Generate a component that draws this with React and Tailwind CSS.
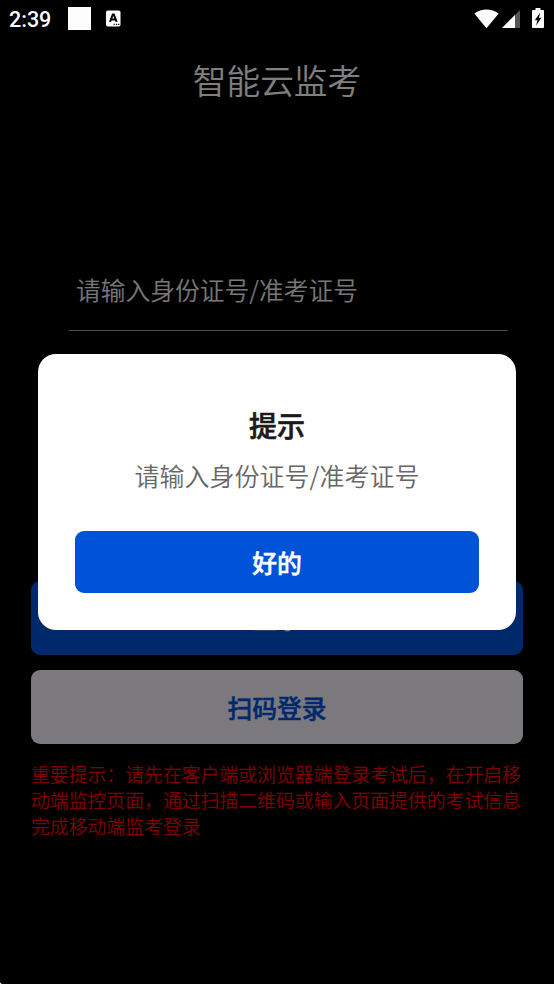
import React, { useState } from 'react';

const PLACEHOLDER = '请输入身份证号/准考证号';

// Android style status bar, stays above the dimmed backdrop
const StatusBar = () => (
    <header className="relative z-20 flex h-10 items-center pr-[10px] pl-[9px] text-white">
        <span className="w-[59px] font-['Roboto',sans-serif] text-[21.5px] leading-[38px] font-medium">2:39</span>
        <span className="-mt-[3px] h-[23px] w-[23px] bg-[#fdfdfd]" />
        <svg className="-mt-[3px] ml-[15px]" width="15" height="17" viewBox="0 0 15 17">
            <rect x="0" y="0.5" width="14.5" height="16" rx="1.8" fill="#fff" />
            <path d="M4 11.8 6.8 4.4h1l2.8 7.4M5.2 9.4h4.2" fill="none" stroke="#000" strokeWidth="2" />
            <path d="M7.6 14.4h1.2M10 14.4h1.2M12.2 14.4h1.2" stroke="#000" strokeWidth="1.3" />
        </svg>
        <div className="-mt-[3px] ml-auto flex items-center">
            <svg width="25" height="20" viewBox="0 0 25 20">
                <path d="M0.3 4.4C7.5-0.9 17.5-0.9 24.7 4.4L12.5 19.3Z" fill="#fff" />
            </svg>
            <svg className="ml-[3px]" width="18" height="18" viewBox="0 0 18 18">
                <path d="M0 18 18 0V18Z" fill="#555" />
                <path d="M0 18 13 5V18Z" fill="#fff" />
            </svg>
            <svg className="-mt-[2px] ml-[12px]" width="12" height="20" viewBox="0 0 12 20">
                <path d="M3.5 0h5v2H11a1 1 0 0 1 1 1v16a1 1 0 0 1-1 1H1a1 1 0 0 1-1-1V3a1 1 0 0 1 1-1h2.5Z" fill="#fff" />
                <path d="M8.2 4.4 2.8 12.2h2.6L4 17.8 9.4 9.8H6.9Z" fill="#000" />
            </svg>
        </div>
    </header>
);

const TipDialog = ({ onClose }) => (
    <div className="absolute inset-0 z-10 flex flex-col items-center bg-black/50 pt-[354px]">
        <div
            role="dialog"
            className="flex h-[275.5px] w-[478px] flex-col items-center rounded-[18px] bg-white px-[36.7px] pt-[51px]"
        >
            <h2 className="text-[28px] leading-[40px] font-medium text-[#1a1a1a] [-webkit-text-stroke:0.6px]">提示</h2>
            <p className="mt-[10px] text-[25px] leading-[40px] font-[350] whitespace-nowrap text-[#666]">{PLACEHOLDER}</p>
            <button
                onClick={onClose}
                className="mt-[36px] h-[61.5px] w-full rounded-[9px] bg-[#0052d9] pt-px text-[24.8px] font-medium text-white [-webkit-text-stroke:0.5px]"
            >
                好的
            </button>
        </div>
    </div>
);

const App = () => {
    const [open, setOpen] = useState(true);

    return (
        <div className="h-[984px] w-full bg-white">
            <div className="relative h-full w-full overflow-hidden rounded-bl-[3px] bg-black font-['Noto_Sans_CJK_SC',sans-serif]">
                <StatusBar />
                <main className="flex flex-col px-[31px] pt-[15px]">
                    <h1 className="text-center text-[33.7px] leading-[50px] font-[350] text-white">智能云监考</h1>

                    <div className="mr-[15px] ml-[38px] mt-[144px] h-[81.5px] border-b border-[#999] pt-[20px] pl-[7px] text-[24.75px] leading-[40px] font-[350] text-[#eee]">
                        {PLACEHOLDER}
                    </div>

                    <button className="mt-[250.5px] h-[73.5px] rounded-[9px] bg-[#0052d9] text-[24.8px] font-medium text-white [-webkit-text-stroke:0.5px]">
                        登录
                    </button>
                    <button className="mt-[15px] h-[74px] rounded-[9px] bg-[#f6f2fd] pt-[2px] text-[24.8px] font-medium text-[#0052d9] [-webkit-text-stroke:0.5px]">
                        扫码登录
                    </button>

                    <p className="mt-[17px] -mr-1 text-[18.85px] leading-[26px] font-[350] text-[#f00]">
                        重要提示：请先在客户端或浏览器端登录考试后，在开启移
                        <br />
                        动端监控页面，通过扫描二维码或输入页面提供的考试信息
                        <br />
                        完成移动端监考登录
                    </p>
                </main>
                {open && <TipDialog onClose={() => setOpen(false)} />}
            </div>
        </div>
    );
};

export default App;
